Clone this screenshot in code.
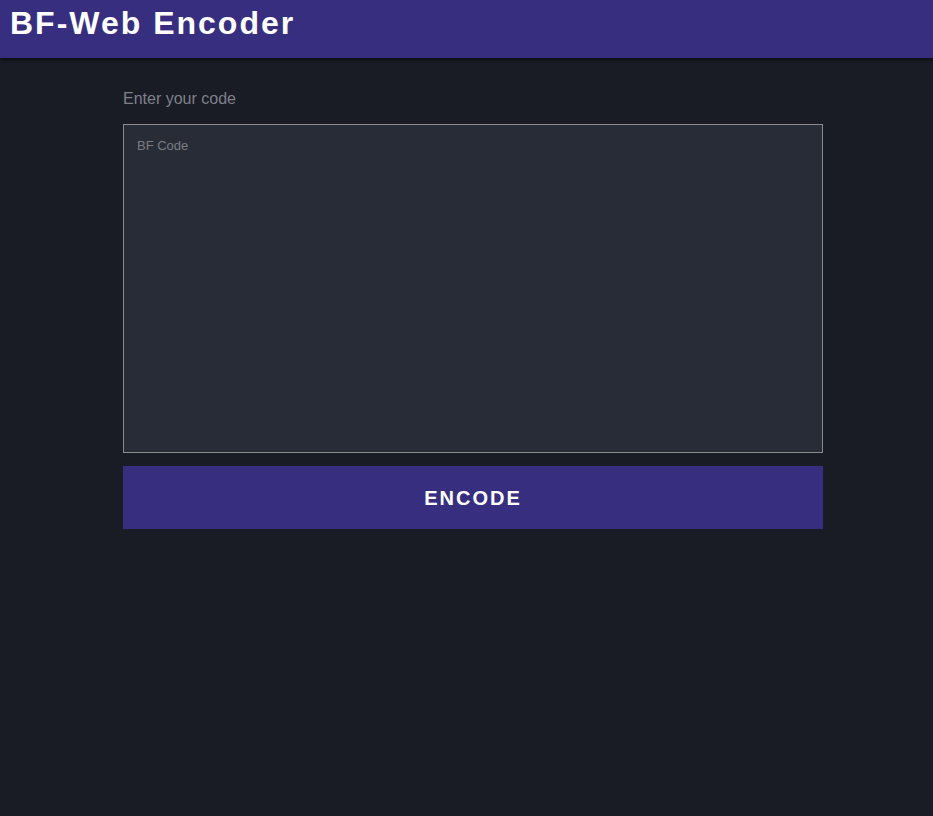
import React from 'react';

export default function App() {
    return (
        <div className="min-h-screen w-full bg-[#191b25] font-['Liberation_Sans',Arial,sans-serif]">
            {/* Header */}
            <header className="h-[58px] bg-[#372e7f] px-[10px] shadow-[0_2px_3px_rgba(0,0,0,0.5)]">
                <h1 className="text-[32px] leading-[46px] font-bold tracking-[2px] text-white">BF-Web Encoder</h1>
            </header>

            {/* Encoder form */}
            <main className="ml-[123px] w-[700px] pt-[32px]">
                <label className="block text-[16px] leading-[18px] text-[#7f818a]">Enter your code</label>
                <textarea
                    placeholder="BF Code"
                    className="mt-[16px] block h-[329px] w-full resize-none border border-[#8b8b8f] bg-[#282c37] px-[13px] py-[11px] text-[13px] text-white outline-none placeholder:text-[#7b7d85]"
                />
                <button className="mt-[13px] h-[63px] w-full bg-[#372e7f] text-[20px] font-bold tracking-[2px] text-white">
                    ENCODE
                </button>
            </main>
        </div>
    );
}
